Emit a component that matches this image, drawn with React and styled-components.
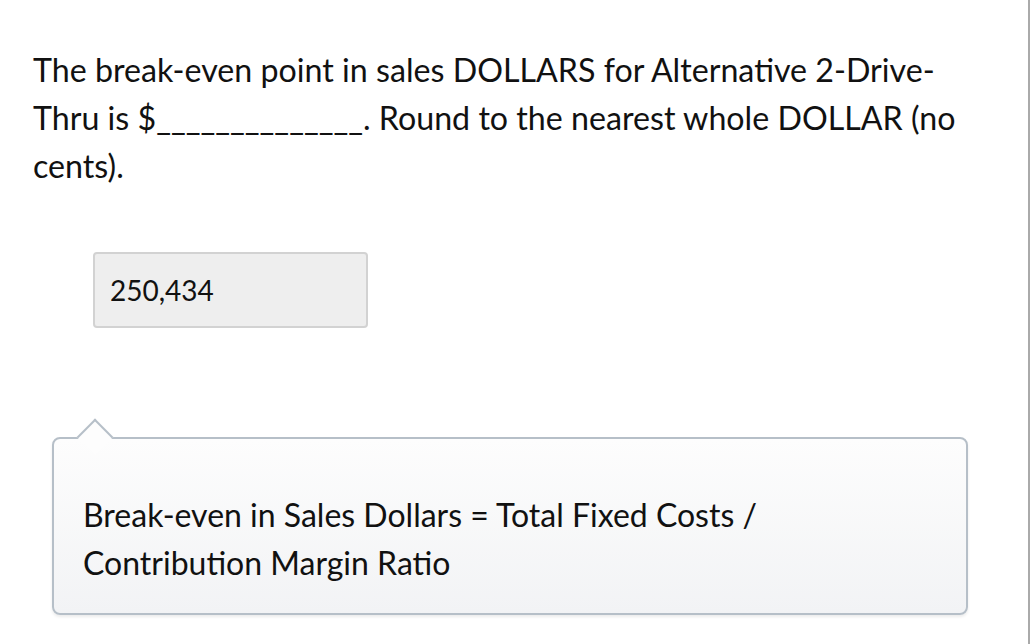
import React from 'react';
import styled, { createGlobalStyle } from 'styled-components';

const GlobalStyle = createGlobalStyle`
  html, body {
    margin: 0;
    padding: 0;
    background: #fff;
  }
  body {
    font-family: Lato, "Open Sans", sans-serif;
    color: #111;
  }
`;

const Page = styled.div`
  box-sizing: border-box;
  width: 1030px;
  height: 644px;
  border-right: 2px solid #aaa;
  padding: 46px 0 0 33px;
  overflow: hidden;
`;

const Question = styled.p`
  margin: 0;
  width: 935px;
  font-size: 32.2px;
  line-height: 48px;
`;

const Answer = styled.div`
  box-sizing: border-box;
  margin: 62px 0 0 60px;
  width: 275px;
  height: 76px;
  padding: 0 15px;
  display: flex;
  align-items: center;
  background: #eee;
  border: 2px solid #d2d2d2;
  border-radius: 4px;
  font-size: 28px;
`;

const Popover = styled.div`
  position: relative;
  box-sizing: border-box;
  margin: 109px 0 0 19px;
  width: 916px;
  height: 178px;
  padding: 52px 29px 0;
  border: 2px solid #b6bfc8;
  border-radius: 8px;
  background: linear-gradient(#fdfdfd, #f2f3f5);
  box-shadow: 0 2px 3px rgba(0, 0, 0, 0.08);

  &::before {
    content: '';
    position: absolute;
    top: -15px;
    left: 28px;
    width: 24px;
    height: 24px;
    background: #fdfdfd;
    border-top: 2px solid #b6bfc8;
    border-left: 2px solid #b6bfc8;
    transform: rotate(45deg);
  }
`;

const Hint = styled.p`
  margin: 0;
  font-size: 32px;
  line-height: 48px;
`;

export default function App() {
  return (
    <>
      <GlobalStyle />
      <Page>
        <Question>
          The break-even point in sales DOLLARS for Alternative 2-Drive-Thru is $______________. Round to the nearest whole DOLLAR (no cents).
        </Question>
        <Answer>250,434</Answer>
        <Popover>
          <Hint>
            Break-even in Sales Dollars = Total Fixed Costs /
            <br />
            Contribution Margin Ratio
          </Hint>
        </Popover>
      </Page>
    </>
  );
}
